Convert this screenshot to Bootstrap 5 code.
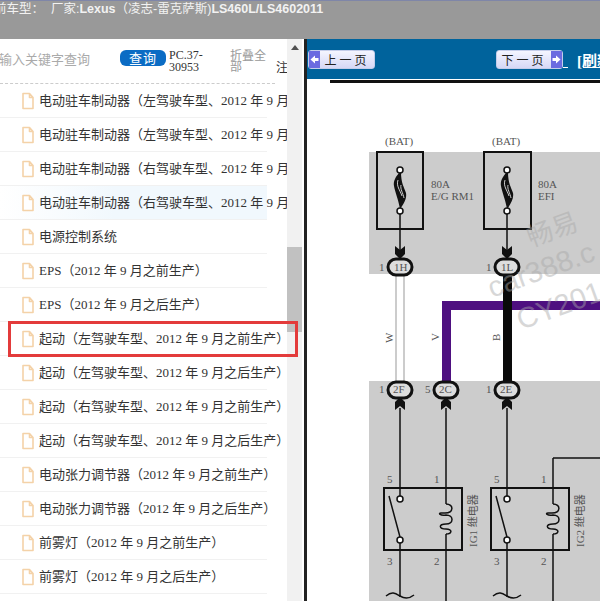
<!DOCTYPE html>
<html lang="zh"><head><meta charset="utf-8"><title>维修手册</title>
<link href="https://cdn.jsdelivr.net/npm/bootstrap@5.3.0/dist/css/bootstrap.min.css" rel="stylesheet">
<style>
html,body{width:600px;height:601px;overflow:hidden;margin:0;background:#fff}
body{font-family:"Liberation Serif","Noto Sans CJK SC",serif;font-size:13px;color:#333}
.topstrip{height:39px;background:#999;border-top:1px solid #7f86a8;color:#f2f2f2;font:12.5px "Liberation Sans","Noto Sans CJK SC",sans-serif;padding-top:1px;white-space:nowrap;overflow:hidden}
.topstrip span{display:block;margin-left:-6px;line-height:15px}
.mainrow{height:562px}
.sidepane{width:287px;overflow:hidden;flex:none}
.searchbar{height:45px;border-bottom:1px dashed #ccc;width:275px}
.searchbar>*{flex:none}
.hint{width:120px;color:#aaa;font:13px/1 "Noto Sans CJK SC",sans-serif;padding-top:13px;white-space:nowrap;margin-left:-1px}
.askbtn{width:46px;height:16px;margin-top:11px;margin-left:1px;background:#0b6cc4;color:#fff;border:0;border-radius:6px;padding:0;font:13px/16px "Noto Sans CJK SC",sans-serif;letter-spacing:1px}
.pcode{width:37px;margin:10px 0 0 3px;font-size:12px;line-height:12px;color:#333}
.foldall{width:38px;margin:10px 0 0 24px;color:#999;font:12px/11px "Noto Sans CJK SC",sans-serif}
.tailnote{margin:22px 0 0 8px;font:12px/12px "Noto Sans CJK SC",sans-serif;color:#333}
.treeitem{height:34px;white-space:nowrap;padding-left:22px;gap:5px;color:#333;font-size:13px;width:287px}
.treeitem svg{flex:none}
.treeitem span{flex:none}
.treeitem::after{content:"";position:absolute;left:0;width:267px;bottom:0;border-bottom:1px solid #f1f1f1}
.treeitem.tint{background:linear-gradient(90deg,#fff,#f1f8fd 40%,#f1f8fd 267px,#fff 267px)}
.redmark{position:absolute;left:8px;top:282px;width:290px;height:36px;border:3px solid #e33b3b;z-index:5}
.scrolltrack{width:15px;background:#f1f1f1;flex:none}
.upmark{width:0;height:0;margin:6px auto 0;border:4px solid transparent;border-top:0;border-bottom-width:5px;border-bottom-color:#505050}
.scrollthumb{height:85px;margin-top:197px;background:#c1c1c1}
.gutter{width:2px;background:#fff;flex:none}
.blackedge{width:3px;background:#222;flex:none}
.docpane{width:293px;flex:none;overflow:hidden}
.bluebar{height:40px;background:#00639c;white-space:nowrap}
.pagebtn{width:67px;height:19px;flex:none;background:linear-gradient(#f4f5ff,#d6d8f6);border:1px solid #c4cdea;border-radius:3px;font:12px/17px "Noto Sans CJK SC",sans-serif;color:#222;padding:0;display:flex;align-items:stretch}
.pagebtn svg{width:11px;height:17px;background:#6b6be0;flex:none}
.pagebtn i{font-style:normal;flex:1;text-align:center;letter-spacing:3px}
.prevbtn{margin-left:1px}
.nextbtn{margin-left:121px}
.gapline{width:5px;height:1px;background:#fff;align-self:center;margin-top:16px;flex:none}
.refresh{color:#fff;font:bold 15px "Liberation Serif","Noto Sans CJK SC",serif;text-decoration:underline;margin-left:9px;flex:none}
.wire-svg{display:block;width:293px;height:522px}
.wire-svg text{font-family:"Liberation Serif","Noto Sans CJK SC",serif;fill:#555;font-size:11px}
.wire-svg text.mark{fill:#a8a8a8;opacity:.45;font-family:"Liberation Sans","Noto Sans CJK SC",sans-serif}
.wire-svg text.wm1{font-size:26px}
.wire-svg text.wm2{font-size:29px}
</style></head>
<body>
<div class="topstrip"><span>前车型：&nbsp;&nbsp;厂家:<b>Lexus</b>（凌志-雷克萨斯)<b>LS460L/LS4602011</b></span></div>
<div class="d-flex mainrow position-relative">
<div class="sidepane">
 <div class="d-flex searchbar">
  <div class="hint">输入关键字查询</div>
  <button class="askbtn" type="button">查询</button>
  <div class="pcode">PC.37-30953</div>
  <div class="foldall">折叠全部</div>
  <div class="tailnote">注</div>
 </div>
 <div>
  <a class="treeitem d-flex align-items-center position-relative text-decoration-none"><svg width="12" height="18" viewBox="0 0 12 18"><path d="M1 1.5h6.500l3.500 4v11h-10z M7.500 1.500v4h3.500" fill="#fff" stroke="#f4d2a8" stroke-width="1.6" stroke-linejoin="round"/></svg><span>电动驻车制动器（左驾驶车型、2012 年 9 月之前生产）</span></a>
  <a class="treeitem d-flex align-items-center position-relative text-decoration-none"><svg width="12" height="18" viewBox="0 0 12 18"><path d="M1 1.5h6.500l3.500 4v11h-10z M7.500 1.500v4h3.500" fill="#fff" stroke="#f4d2a8" stroke-width="1.6" stroke-linejoin="round"/></svg><span>电动驻车制动器（左驾驶车型、2012 年 9 月之后生产）</span></a>
  <a class="treeitem d-flex align-items-center position-relative text-decoration-none"><svg width="12" height="18" viewBox="0 0 12 18"><path d="M1 1.5h6.500l3.500 4v11h-10z M7.500 1.500v4h3.500" fill="#fff" stroke="#f4d2a8" stroke-width="1.6" stroke-linejoin="round"/></svg><span>电动驻车制动器（右驾驶车型、2012 年 9 月之前生产）</span></a>
  <a class="treeitem tint d-flex align-items-center position-relative text-decoration-none"><svg width="12" height="18" viewBox="0 0 12 18"><path d="M1 1.5h6.500l3.500 4v11h-10z M7.500 1.500v4h3.500" fill="#fff" stroke="#f4d2a8" stroke-width="1.6" stroke-linejoin="round"/></svg><span>电动驻车制动器（右驾驶车型、2012 年 9 月之后生产）</span></a>
  <a class="treeitem d-flex align-items-center position-relative text-decoration-none"><svg width="12" height="18" viewBox="0 0 12 18"><path d="M1 1.5h6.500l3.500 4v11h-10z M7.500 1.500v4h3.500" fill="#fff" stroke="#f4d2a8" stroke-width="1.6" stroke-linejoin="round"/></svg><span>电源控制系统</span></a>
  <a class="treeitem d-flex align-items-center position-relative text-decoration-none"><svg width="12" height="18" viewBox="0 0 12 18"><path d="M1 1.5h6.500l3.500 4v11h-10z M7.500 1.500v4h3.500" fill="#fff" stroke="#f4d2a8" stroke-width="1.6" stroke-linejoin="round"/></svg><span>EPS（2012 年 9 月之前生产）</span></a>
  <a class="treeitem d-flex align-items-center position-relative text-decoration-none"><svg width="12" height="18" viewBox="0 0 12 18"><path d="M1 1.5h6.500l3.500 4v11h-10z M7.500 1.500v4h3.500" fill="#fff" stroke="#f4d2a8" stroke-width="1.6" stroke-linejoin="round"/></svg><span>EPS（2012 年 9 月之后生产）</span></a>
  <a class="treeitem d-flex align-items-center position-relative text-decoration-none"><svg width="12" height="18" viewBox="0 0 12 18"><path d="M1 1.5h6.500l3.500 4v11h-10z M7.500 1.500v4h3.500" fill="#fff" stroke="#f4d2a8" stroke-width="1.6" stroke-linejoin="round"/></svg><span>起动（左驾驶车型、2012 年 9 月之前生产）</span></a>
  <a class="treeitem d-flex align-items-center position-relative text-decoration-none"><svg width="12" height="18" viewBox="0 0 12 18"><path d="M1 1.5h6.500l3.500 4v11h-10z M7.500 1.500v4h3.500" fill="#fff" stroke="#f4d2a8" stroke-width="1.6" stroke-linejoin="round"/></svg><span>起动（左驾驶车型、2012 年 9 月之后生产）</span></a>
  <a class="treeitem d-flex align-items-center position-relative text-decoration-none"><svg width="12" height="18" viewBox="0 0 12 18"><path d="M1 1.5h6.500l3.500 4v11h-10z M7.500 1.500v4h3.500" fill="#fff" stroke="#f4d2a8" stroke-width="1.6" stroke-linejoin="round"/></svg><span>起动（右驾驶车型、2012 年 9 月之前生产）</span></a>
  <a class="treeitem d-flex align-items-center position-relative text-decoration-none"><svg width="12" height="18" viewBox="0 0 12 18"><path d="M1 1.5h6.500l3.500 4v11h-10z M7.500 1.500v4h3.500" fill="#fff" stroke="#f4d2a8" stroke-width="1.6" stroke-linejoin="round"/></svg><span>起动（右驾驶车型、2012 年 9 月之后生产）</span></a>
  <a class="treeitem d-flex align-items-center position-relative text-decoration-none"><svg width="12" height="18" viewBox="0 0 12 18"><path d="M1 1.5h6.500l3.500 4v11h-10z M7.500 1.500v4h3.500" fill="#fff" stroke="#f4d2a8" stroke-width="1.6" stroke-linejoin="round"/></svg><span>电动张力调节器（2012 年 9 月之前生产）</span></a>
  <a class="treeitem d-flex align-items-center position-relative text-decoration-none"><svg width="12" height="18" viewBox="0 0 12 18"><path d="M1 1.5h6.500l3.500 4v11h-10z M7.500 1.500v4h3.500" fill="#fff" stroke="#f4d2a8" stroke-width="1.6" stroke-linejoin="round"/></svg><span>电动张力调节器（2012 年 9 月之后生产）</span></a>
  <a class="treeitem d-flex align-items-center position-relative text-decoration-none"><svg width="12" height="18" viewBox="0 0 12 18"><path d="M1 1.5h6.500l3.500 4v11h-10z M7.500 1.500v4h3.500" fill="#fff" stroke="#f4d2a8" stroke-width="1.6" stroke-linejoin="round"/></svg><span>前雾灯（2012 年 9 月之前生产）</span></a>
  <a class="treeitem d-flex align-items-center position-relative text-decoration-none"><svg width="12" height="18" viewBox="0 0 12 18"><path d="M1 1.5h6.500l3.500 4v11h-10z M7.500 1.500v4h3.500" fill="#fff" stroke="#f4d2a8" stroke-width="1.6" stroke-linejoin="round"/></svg><span>前雾灯（2012 年 9 月之后生产）</span></a>
 </div>
</div>
<div class="redmark"></div>
<div class="scrolltrack"><div class="upmark"></div><div class="scrollthumb"></div></div>
<div class="gutter"></div><div class="blackedge"></div>
<div class="docpane">
 <div class="bluebar d-flex align-items-center">
  <button type="button" class="pagebtn prevbtn"><svg viewBox="0 0 11 17"><path d="M1.500 8.500L6 4.500V7H9.500V10H6V12.500Z" fill="#fff"/></svg><i>上一页</i></button>
  <button type="button" class="pagebtn nextbtn"><i>下一页</i><svg viewBox="0 0 11 17"><path d="M9.500 8.500L5 4.500V7H1.500V10H5V12.500Z" fill="#fff"/></svg></button>
  <span class="gapline"></span>
  <span class="refresh">[刷新</span>
 </div>
 <svg class="wire-svg" viewBox="307 79 293 522">
  <rect x="307" y="79" width="293" height="522" fill="#fff"/>
  <rect x="330" y="80" width="270" height="3" fill="#111"/>
  <rect x="369" y="152" width="231" height="122" fill="#ccc"/>
  <rect x="369" y="381" width="231" height="220" fill="#ccc"/>
  <g fill="none" stroke="#111">
   <rect x="377" y="152" width="46" height="77" stroke-width="2"/>
   <rect x="484" y="152" width="47" height="77" stroke-width="2"/>
   <path d="M400 214V258M507 214V258" stroke-width="1.5"/>
  </g>
  <g fill="#111">
   <path d="M400 172C396 176 393 181 394 186C395 192 398 198 400 209C404 204 407 198 406 193C404 187 401 183 401 172Z"/>
   <path d="M507 172C503 176 500 181 501 186C502 192 505 198 507 209C511 204 514 198 513 193C511 187 508 183 508 172Z"/>
  </g>
  <g fill="none" stroke="#ccc">
   <path d="M398 180C396 186 400 190 402 196M401 185C400 189 403 193 404 198"/>
   <path d="M505 180C503 186 507 190 509 196M508 185C507 189 510 193 511 198"/>
  </g>
  <g fill="#fff" stroke="#111" stroke-width="1.500">
   <circle cx="400" cy="170" r="3"/><circle cx="400" cy="211" r="3"/>
   <circle cx="507" cy="170" r="3"/><circle cx="507" cy="211" r="3"/>
  </g>
  <path d="M395 246l5 4 5-4v8l-5 5-5-5zM502 246l5 4 5-4v8l-5 5-5-5z" fill="#111"/>
  <path d="M396 274V381M404 274V381" stroke="#999" stroke-width="1"/>
  <path d="M446.500 381V305.500H600" fill="none" stroke="#4e1080" stroke-width="9"/>
  <rect x="503" y="274" width="9" height="107" fill="#0a0a0a"/>
  <g fill="#ddd" stroke="#111" stroke-width="3">
   <rect x="388" y="259" width="24" height="16" rx="8"/><rect x="495" y="259" width="24" height="16" rx="8"/>
   <rect x="388" y="382" width="24" height="16" rx="8"/><rect x="434" y="382" width="24" height="16" rx="8"/><rect x="495" y="382" width="24" height="16" rx="8"/>
  </g>
  <g stroke="#111" fill="none" stroke-width="1.500">
   <path d="M400 408V496M446 408V504M507 408V496M553 458H600M553 458V504"/>
   <rect x="384" y="488" width="78" height="62" stroke-width="2"/><rect x="491" y="488" width="78" height="62" stroke-width="2"/>
   <path d="M389 496L400 537M496 496L507 537"/>
   <path d="M400 543V597M507 543V597M446 534V601M553 534V601"/>
   <path d="M446 504c8 0 8 9-1 9h-4c-3 0-1 3 5 2c8 0 8 9 0 9c-8 0-7 5 0 5c7 0 6 5 0 5M553 504c8 0 8 9-1 9h-4c-3 0-1 3 5 2c8 0 8 9 0 9c-8 0-7 5 0 5c7 0 6 5 0 5"/>
   <path d="M386 596c6-5 9-3 14 0s9 3 14-1M493 596c6-5 9-3 14 0s9 3 14-1"/>
  </g>
  <g fill="#fff" stroke="#111" stroke-width="1.500"><circle cx="400" cy="499" r="3"/><circle cx="400" cy="540" r="3"/><circle cx="507" cy="499" r="3"/><circle cx="507" cy="540" r="3"/></g>
  <path d="M395 410l5-4 5 4v-8l-5-5-5 5zM441 410l5-4 5 4v-8l-5-5-5 5zM502 410l5-4 5 4v-8l-5-5-5 5z" fill="#111"/>
  <g>
   <text x="385" y="145">(BAT)</text><text x="492" y="145">(BAT)</text>
   <text x="431" y="188">80A</text><text x="431" y="200">E/G RM1</text>
   <text x="538" y="188">80A</text><text x="538" y="200">EFI</text>
   <text x="379" y="271">1</text><text x="486" y="271">1</text>
   <text x="394" y="271">1H</text><text x="501" y="271">1L</text>
   <text x="379" y="393">1</text><text x="425" y="393">5</text><text x="486" y="393">1</text>
   <text x="393" y="393">2F</text><text x="439" y="393">2C</text><text x="500" y="393">2E</text>
   <text x="387" y="483">5</text><text x="434" y="483">1</text><text x="494" y="483">5</text><text x="541" y="483">1</text>
   <text x="387" y="565">3</text><text x="434" y="565">2</text><text x="494" y="565">3</text><text x="541" y="565">2</text>
   <text transform="translate(393,343) rotate(-90)">W</text><text transform="translate(439,341) rotate(-90)">V</text><text transform="translate(500,341) rotate(-90)">B</text>
   <text transform="translate(477,547) rotate(-90)">IG1 继电器</text><text transform="translate(584,547) rotate(-90)">IG2 继电器</text>
  </g>
  <g>
   <text class="mark wm1" transform="translate(531,247) rotate(-20)">畅易</text>
   <text class="mark wm2" transform="translate(492,298) rotate(-20)">car388.c</text>
   <text class="mark wm2" transform="translate(521,330) rotate(-20)">CY201</text>
  </g>
 </svg>
</div>
</div>
</body></html>
